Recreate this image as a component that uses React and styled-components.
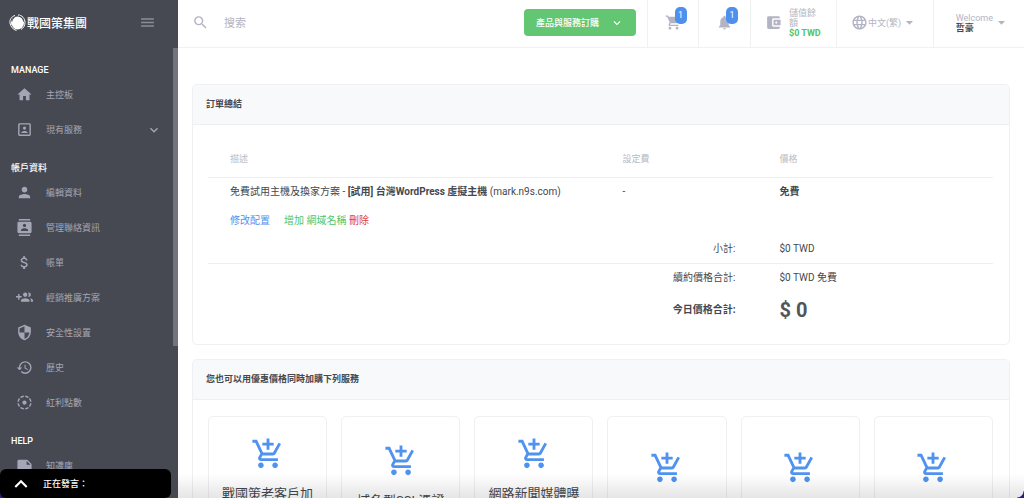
import React from 'react';
import styled, { createGlobalStyle } from 'styled-components';
import {
  MdHome,
  MdPortrait,
  MdPerson,
  MdContacts,
  MdAttachMoney,
  MdSecurity,
  MdHistory,
  MdFilterTiltShift,
  MdNote,
  MdSearch,
  MdShoppingCart,
  MdNotifications,
  MdAccountBalanceWallet,
  MdLanguage,
  MdArrowDropDown,
  MdAddShoppingCart,
  MdMenu,
  MdExpandMore,
  MdExpandLess,
} from 'react-icons/md';

const GlobalStyle = createGlobalStyle`
  * {
    box-sizing: border-box;
  }

  body {
    margin: 0;
    overflow: hidden;
    background: #ffffff;
    color: #45484e;
    font-family: Roboto, 'Noto Sans CJK TC', sans-serif;
    font-size: 10px;
    line-height: 14px;
  }

  button, input {
    font: inherit;
  }

  a {
    text-decoration: none;
  }
`;

const Layout = styled.div`
  display: grid;
  grid-template-columns: 178px 1fr;
  height: 100vh;
  overflow: hidden;
`;

const Sidebar = styled.aside`
  position: relative;
  background: #464951;
  overflow: hidden;
`;

const ScrollThumb = styled.div`
  position: absolute;
  top: 48px;
  right: 0;
  width: 5px;
  height: 298px;
  background: #71747e;
`;

const Brand = styled.div`
  display: flex;
  align-items: center;
  justify-content: space-between;
  height: 49px;
  padding: 0 22px 4px 9px;
`;

const Logo = styled.a`
  display: flex;
  align-items: center;
  gap: 1px;
  color: #ffffff;
  font-family: 'Noto Sans CJK TC', sans-serif;
  font-size: 12px;
  font-weight: 500;
`;

const IconButton = styled.button`
  display: flex;
  padding: 0;
  border: 0;
  background: none;
  color: #8b8d98;
  font-size: 17px;
  cursor: pointer;
`;

const NavTitle = styled.h2`
  margin: 14px 0 0;
  padding-left: 11px;
  color: #ffffff;
  font-size: 9px;
  font-weight: 500;
  line-height: 14px;
`;

const NavList = styled.ul`
  margin: 0;
  padding: 0;
  list-style: none;
`;

const NavLink = styled.a`
  display: flex;
  align-items: center;
  gap: 13px;
  height: 35px;
  padding: 0 16px;
  color: #a4a6b6;
  font-size: 9px;

  > svg:first-child {
    width: 17px;
    height: 17px;
  }
`;

const NavArrow = styled(MdExpandMore)`
  margin-left: auto;
  font-size: 16px;
`;

const ChatBar = styled.button`
  position: fixed;
  left: 0;
  bottom: 0;
  display: flex;
  align-items: center;
  gap: 9px;
  width: 171px;
  height: 29px;
  padding: 0 8px;
  border: 0;
  border-radius: 6px;
  background: #000000;
  color: #ffffff;
  font-size: 9px;
  font-weight: 500;

  svg {
    width: 26px;
    height: 26px;
  }
`;

const Main = styled.main`
  min-width: 0;
`;

const TopBar = styled.header`
  display: flex;
  align-items: stretch;
  height: 48px;
  border-bottom: 1px solid #f1f1f3;
`;

const Search = styled.label`
  display: flex;
  flex: 1;
  align-items: center;
  gap: 15px;
  padding: 0 14px 3px;
  color: #b3b4c3;
  font-size: 17px;

  input {
    width: 160px;
    height: 18px;
    padding: 2px 0 0;
    border: 0;
    outline: 0;
    background: none;
    color: #45484e;
    font-size: 11px;
    line-height: 16px;
  }

  input::placeholder {
    color: #b3b4c3;
  }
`;

const OrderButton = styled.button`
  display: flex;
  align-items: center;
  justify-content: space-between;
  width: 112px;
  height: 27px;
  margin: 9px 11px 0 0;
  padding: 0 12px;
  border: 0;
  border-radius: 4px;
  background: #62c673;
  color: #ffffff;
  font-size: 9px;
  font-weight: 500;

  svg {
    font-size: 14px;
  }
`;

const TopItem = styled.button`
  display: flex;
  align-items: center;
  justify-content: ${(props) => props.$justify || 'center'};
  gap: ${(props) => props.$gap || 0}px;
  width: ${(props) => props.$width}px;
  padding: 0 ${(props) => props.$pad || 0}px 2px;
  border: 0;
  border-left: 1px solid #f1f1f3;
  background: none;
  color: #b3b4c3;
  font-size: 9px;
  line-height: 10px;
  text-align: left;

  svg {
    flex: none;
    font-size: 17px;
  }

  strong {
    display: block;
    color: ${(props) => props.$strong};
    font-weight: 700;
  }
`;

const Badged = styled.span`
  position: relative;
  display: flex;
`;

const Badge = styled.span`
  position: absolute;
  top: -7px;
  right: -5px;
  width: 12px;
  height: 17px;
  border-radius: 5px;
  background: #4f8fee;
  color: #ffffff;
  font-size: 9px;
  line-height: 17px;
  text-align: center;
`;

const Content = styled.div`
  display: flex;
  flex-direction: column;
  gap: 14px;
  padding: 36px 14px 0;
`;

const Card = styled.section`
  border: 1px solid #f0f0f3;
  border-radius: 5px;
`;

const CardTitle = styled.h3`
  margin: 0;
  padding: 0 13px;
  border-bottom: 1px solid #f0f0f3;
  border-radius: 5px 5px 0 0;
  background: #f8f9fb;
  font-size: 9px;
  font-weight: 700;
  line-height: 39px;
`;

const Summary = styled.table`
  width: calc(100% - 31px);
  margin: 16px 16px 16px 15px;
  border-collapse: collapse;
  table-layout: fixed;

  th {
    height: 36px;
    padding: 0 22px;
    border-bottom: 1px solid #efeff1;
    color: #b9babf;
    font-size: 9px;
    font-weight: 400;
    text-align: left;
  }

  td {
    padding: 7px 22px 0;
    vertical-align: top;
  }
`;

const Actions = styled.div`
  display: flex;
  gap: 14px;
  margin-top: 15px;
`;

const ActionLink = styled.a`
  color: ${(props) => props.$color};
`;

const TotalRow = styled.tr`
  border-bottom: ${(props) => (props.$line ? '1px solid #efeff1' : '0')};

  td {
    height: ${(props) => props.$height}px;
    padding: ${(props) => (props.$line ? 7 : 0)}px 22px 0;
    vertical-align: middle;
  }

  td:first-child {
    text-align: right;
  }
`;

const GrandTotal = styled.strong`
  color: #51565a;
  font-size: 20px;
  font-weight: 700;
  line-height: 22px;
`;

const Tiles = styled.div`
  display: grid;
  grid-template-columns: repeat(6, 1fr);
  gap: 14px;
  padding: 16px 16px 16px 15px;
`;

const Tile = styled.a`
  display: flex;
  flex-direction: column;
  align-items: center;
  gap: 15px;
  height: 140px;
  padding-top: ${(props) => 20 + (3 - props.$lines) * 7}px;
  border: 1px solid #f0f0f3;
  border-radius: 5px;
  color: #45484e;
  font-size: 13px;
  line-height: 15px;
  text-align: center;

  svg {
    color: #4f92ef;
    font-size: 34px;
  }
`;

const BottomShade = styled.div`
  position: fixed;
  left: 178px;
  right: 0;
  bottom: 0;
  height: 24px;
  background: linear-gradient(rgba(0, 0, 0, 0), rgba(0, 0, 0, 0.1));
  pointer-events: none;
`;

const Corner = styled.div`
  position: fixed;
  bottom: 0;
  ${(props) => props.$side}: 0;
  width: 7px;
  height: 7px;
  background: radial-gradient(
    circle at ${(props) => (props.$side === 'right' ? 'left' : 'right')} top,
    transparent 6px,
    #35158c 7px
  );
`;

const GroupAdd = () => (
  <svg viewBox="0 0 24 24" fill="currentColor">
    <path d="M8 10H5V7H3v3H0v2h3v3h2v-3h3v-2zm10 1c1.66 0 2.99-1.34 2.99-3S19.66 5 18 5c-.32 0-.63.05-.91.14.57.81.9 1.79.9 2.86s-.34 2.04-.9 2.86c.28.09.59.14.91.14zm-5 0c1.66 0 2.99-1.34 2.99-3S14.66 5 13 5c-1.66 0-3 1.34-3 3s1.34 3 3 3zm6.62 2.16c.83.73 1.38 1.66 1.38 2.84v2h3v-2c0-1.54-2.37-2.49-4.38-2.84zM13 13c-2 0-6 1-6 3v2h12v-2c0-2-4-3-6-3z" />
  </svg>
);

const LogoMark = () => (
  <svg width="17" height="17" viewBox="0 0 34 34" fill="none" stroke="#fff">
    <circle cx="17" cy="18" r="13" fill="#fff" stroke="none" />
    <path d="M12 3C5 5 1 11 2 18c1 7 6 13 13 15" strokeWidth="2" />
    <path d="M18 2c8 0 14 7 14 15 0 6-3 11-8 14" strokeWidth="2" />
    <path d="M11 7c-3 2-5 5-5 8" stroke="#464951" strokeWidth="2" />
    <path d="M20 4c5 1 9 6 9 11" stroke="#464951" strokeWidth="2" />
    <path d="M5 22c1 3 3 5 6 7" stroke="#464951" strokeWidth="1" />
  </svg>
);

const sections = [
  {
    title: 'MANAGE',
    items: [
      { icon: MdHome, label: '主控板' },
      { icon: MdPortrait, label: '現有服務', open: true },
    ],
  },
  {
    title: '帳戶資料',
    items: [
      { icon: MdPerson, label: '編輯資料' },
      { icon: MdContacts, label: '管理聯絡資訊' },
      { icon: MdAttachMoney, label: '帳單' },
      { icon: GroupAdd, label: '經銷推廣方案' },
      { icon: MdSecurity, label: '安全性設置' },
      { icon: MdHistory, label: '歷史' },
      { icon: MdFilterTiltShift, label: '紅利點數' },
    ],
  },
  {
    title: 'HELP',
    items: [{ icon: MdNote, label: '知識庫' }],
  },
];

const tiles = [
  { title: '戰國策老客戶加', lines: 3 },
  { title: '域名型SSL憑證', lines: 2 },
  { title: '網路新聞媒體曝', lines: 3 },
  { lines: 1 },
  { lines: 1 },
  { lines: 1 },
];

const App = () => {
  return (
    <>
      <GlobalStyle />
      <Layout>
        <Sidebar>
          <Brand>
            <Logo href="#">
              <LogoMark />
              戰國策集團
            </Logo>
            <IconButton aria-label="menu">
              <MdMenu />
            </IconButton>
          </Brand>
          <nav>
            {sections.map((section) => (
              <div key={section.title}>
                <NavTitle>{section.title}</NavTitle>
                <NavList>
                  {section.items.map(({ icon: Icon, label, open }) => (
                    <li key={label}>
                      <NavLink href="#">
                        <Icon />
                        {label}
                        {open && <NavArrow />}
                      </NavLink>
                    </li>
                  ))}
                </NavList>
              </div>
            ))}
          </nav>
          <ScrollThumb />
        </Sidebar>

        <Main>
          <TopBar>
            <Search>
              <MdSearch />
              <input type="text" placeholder="搜索" aria-label="搜索" />
            </Search>
            <OrderButton>
              產品與服務訂購
              <MdExpandMore />
            </OrderButton>
            <TopItem $width={51} $pad={14}>
              <Badged>
                <MdShoppingCart />
                <Badge>1</Badge>
              </Badged>
            </TopItem>
            <TopItem $width={52}>
              <Badged>
                <MdNotifications />
                <Badge>1</Badge>
              </Badged>
            </TopItem>
            <TopItem $width={86} $pad={14} $gap={7} $justify="flex-start" $strong="#4fc563">
              <MdAccountBalanceWallet />
              <span>
                儲值餘額
                <strong>$0 TWD</strong>
              </span>
            </TopItem>
            <TopItem $width={97} $pad={14} $justify="flex-start">
              <MdLanguage />
              中文(繁)
              <MdArrowDropDown />
            </TopItem>
            <TopItem $width={91} $pad={14} $justify="flex-end" $strong="#45484e">
              <span>
                Welcome
                <strong>哲豪</strong>
              </span>
              <MdArrowDropDown />
            </TopItem>
          </TopBar>

          <Content>
            <Card>
              <CardTitle>訂單總結</CardTitle>
              <Summary>
                <colgroup>
                  <col width="50%" />
                  <col width="20%" />
                  <col width="30%" />
                </colgroup>
                <thead>
                  <tr>
                    <th>描述</th>
                    <th>設定費</th>
                    <th>價格</th>
                  </tr>
                </thead>
                <tbody>
                  <tr>
                    <td>
                      免費試用主機及換家方案 - <b>[試用] 台灣WordPress 虛擬主機</b> (mark.n9s.com)
                      <Actions>
                        <ActionLink href="#" $color="#4f92ef">修改配置</ActionLink>
                        <span>
                          <ActionLink href="#" $color="#4fc563">增加 網域名稱</ActionLink>{' '}
                          <ActionLink href="#" $color="#dc3f3f">刪除</ActionLink>
                        </span>
                      </Actions>
                    </td>
                    <td>-</td>
                    <td><b>免費</b></td>
                  </tr>
                  <TotalRow $height={36} $line>
                    <td colSpan={2}>小計:</td>
                    <td>$0 TWD</td>
                  </TotalRow>
                  <TotalRow $height={29}>
                    <td colSpan={2}>續約價格合計:</td>
                    <td>$0 TWD 免費</td>
                  </TotalRow>
                  <TotalRow $height={35}>
                    <td colSpan={2}><b>今日價格合計:</b></td>
                    <td><GrandTotal>$ 0</GrandTotal></td>
                  </TotalRow>
                </tbody>
              </Summary>
            </Card>

            <Card>
              <CardTitle>您也可以用優惠價格同時加購下列服務</CardTitle>
              <Tiles>
                {tiles.map((tile, i) => (
                  <Tile key={i} href="#" $lines={tile.lines}>
                    <MdAddShoppingCart />
                    {tile.title}
                  </Tile>
                ))}
              </Tiles>
            </Card>
          </Content>
        </Main>
      </Layout>
      <BottomShade />
      <Corner $side="right" />
      <Corner $side="left" />
      <ChatBar>
        <MdExpandLess />
        正在發言：
      </ChatBar>
    </>
  );
};

export default App;
